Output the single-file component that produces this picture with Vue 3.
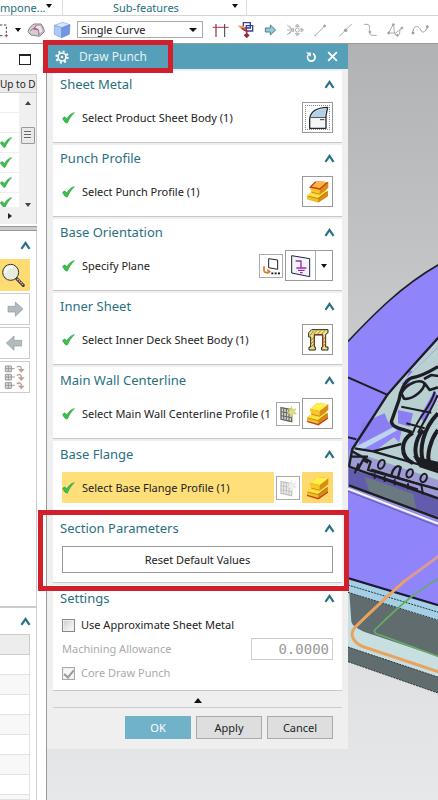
<script setup>
import { ref } from 'vue'

const curveRule = ref('Single Curve')
const useApproximate = ref(false)
const coreDrawPunch = ref(true)
const allowance = ref('0.0000')

const sections = [
  { title: 'Sheet Metal', label: 'Select Product Sheet Body (1)', kind: 'door' },
  { title: 'Punch Profile', label: 'Select Punch Profile (1)', kind: 'profile' },
  { title: 'Base Orientation', label: 'Specify Plane', kind: 'plane' },
  { title: 'Inner Sheet', label: 'Select Inner Deck Sheet Body (1)', kind: 'deck' },
  { title: 'Main Wall Centerline', label: 'Select Main Wall Centerline Profile (1', kind: 'curve', sketch: true },
  { title: 'Base Flange', label: 'Select Base Flange Profile (1)', kind: 'curve', sketch: true, active: true }
]
const statusRows = [false, false, true, true, true, true]
</script>

<template>
  <div class="window">
    <header class="ribbon">
      <div class="group group-left"><span>mpone...</span><i class="caret"></i></div>
      <div class="group group-mid"><span>Sub-features</span><i class="caret"></i></div>
      <div class="group"></div>
    </header>

    <nav class="toolbar" aria-label="Selection tools">
      <svg class="marquee" viewBox="0 0 24 60"><path d="M0 15H19V44M0 47H12" fill="none" stroke="#444" stroke-width="3" stroke-dasharray="7 5" /><path d="M14 47h10M19 42v10" stroke="#b44" stroke-width="3" /></svg>
      <i class="caret"></i>
      <svg class="tool-a" viewBox="0 0 54 54">
        <path d="M3 32C6 20 14 12 22 9H42C48 16 51 24 52 32L38 46 12 42Z" fill="#d3ccd6" stroke="#8b7f92" stroke-width="3" />
        <path d="M20 24 27 13H42L49 30 37 40 34 27Z" fill="#ece4ec" stroke="#9a8b9c" stroke-width="2" />
        <path d="M10 30C16 22 24 20 34 26L36 44" fill="none" stroke="#8b7f92" stroke-width="3" /><path d="M20 24 28 14M20 24 33 26" fill="none" stroke="#cc4a58" stroke-width="3" />
      </svg>
      <svg class="tool-b" viewBox="0 0 54 54">
        <path d="M4 13 29 4 51 11 26 20Z" fill="#d8e7ff" stroke="#86a3da" stroke-width="2" />
        <path d="M4 13 26 20V50L4 40Z" fill="#a9caf8" stroke="#7f9fda" stroke-width="2" />
        <path d="M51 11 26 20V50L49 40Z" fill="#7097e6" stroke="#6a8ad2" stroke-width="2" />
      </svg>
      <div class="select-box">
        <select v-model="curveRule" aria-label="Curve rule"><option>Single Curve</option><option>Connected Curves</option></select>
        <i class="caret"></i>
      </div>
      <div class="tools">
        <svg viewBox="0 0 75 60"><path d="M24 12V51" stroke="#a34452" stroke-width="4" /><path d="M14 22H62" stroke="#c03042" stroke-width="3" /><path d="M50 12V51" stroke="#403848" stroke-width="3" /></svg>
        <svg viewBox="0 0 75 60"><path d="M31 8H52V24H31ZM40 17H59V33H40Z" fill="none" stroke="#3c3f96" stroke-width="4" /><path d="M14 17H32L37 27H25Z" fill="#ee9a4c" /><path d="M26 25 41 33V41M41 33 32 29" stroke="#b0303c" stroke-width="5" fill="none" /><path d="M41 38 50 46 41 55 32 46Z" fill="#8c2d38" /></svg>
        <svg viewBox="0 0 75 60"><path d="M22 24H37V15L53 30 37 45V36H22Z" fill="#93cbd3" stroke="#4e7f8a" stroke-width="3" /></svg>
        <svg viewBox="0 0 75 60" fill="none" stroke="#b4b4b4" stroke-width="3"><path d="M12 14 26 28M12 45 26 31M12 30H26M19 17l7 11M19 43l7-11" /><circle cx="43" cy="30" r="6" /><path d="M43 12 49 20H37ZM43 48 49 40H37ZM24 30 32 24V36ZM62 30 54 24V36Z" fill="#ccc" /></svg>
        <svg viewBox="0 0 75 60" stroke="#aaa" stroke-width="3"><path d="M22 46 50 18" /><circle cx="50" cy="18" r="3" fill="#999" /><circle cx="22" cy="46" r="1" /></svg>
        <svg viewBox="0 0 75 60" stroke="#aaa" stroke-width="3"><path d="M18 50 56 12" /><circle cx="38" cy="31" r="4" fill="#999" /></svg>
        <svg viewBox="0 0 75 60" fill="none" stroke="#aaa" stroke-width="3"><path d="M18 13H27C44 13 24 44 43 46H56" /><circle cx="36" cy="36" r="3" fill="#999" /></svg>
        <svg viewBox="0 0 75 60" fill="none" stroke="#aaa" stroke-width="3"><path d="M17 39 31 12C35 22 30 48 43 46S45 27 57 24M17 39H38L56 25" /><g fill="#999"><circle cx="17" cy="39" r="3" /><circle cx="31" cy="14" r="3" /><circle cx="43" cy="46" r="3" /><circle cx="57" cy="24" r="3" /></g></svg>
        <svg viewBox="0 0 75 60" fill="none" stroke="#999" stroke-width="3"><path d="M14 39C18 8 34 20 38 30S52 38 59 20" /><circle cx="15" cy="39" r="3" fill="#999" /><circle cx="58" cy="20" r="3" fill="#999" /></svg>
      </div>
    </nav>

    <main class="workspace">
      <aside class="navigator">
        <div class="dock-head"><button class="maximize" aria-label="Maximize panel"></button></div>
        <div class="tree">
          <div class="tree-head">Up to D</div>
          <div class="tree-body">
            <ul>
              <li v-for="(done, i) in statusRows" :key="i">
                <svg v-if="done" class="tick" viewBox="0 0 36 33"><path d="M1 18C5 12 9 13 13 21 18 11 26 3 35 2 26 10 20 20 15 31 11 32 8 28 1 18Z" fill="#3cc04e" stroke="#2fa040" stroke-width="2" /></svg>
              </li>
            </ul>
            <div class="scrollbar"><i class="mini-up"></i><span class="thumb"></span><i class="mini-down"></i></div>
          </div>
          <div class="hscroll"><i class="mini-right"></i></div>
        </div>
        <div class="splitter"></div>
        <div class="fold"><svg class="chevron" viewBox="0 0 30 24"><path d="M4 21 15 5 26 21" /></svg></div>
        <div class="side-tools">
          <button class="side-button lit" aria-label="Find">
            <svg viewBox="0 0 90 93"><path d="M50 56 70 76" stroke="#47372a" stroke-width="9" stroke-linecap="round" /><path d="M52 57 69 74" stroke="#ddd" stroke-width="4" stroke-dasharray="4 3" /><circle cx="32" cy="37" r="24" fill="#e8ebe0" stroke="#37332a" stroke-width="3" /><path d="M16 38A18 18 0 0 1 40 21" fill="none" stroke="#fff" stroke-width="8" /></svg>
          </button>
          <button class="side-button" aria-label="Next"><svg viewBox="0 0 90 93"><path d="M24 37H46V24L69 45 46 67V54H24Z" fill="#b2babd" stroke="#939ca0" stroke-width="2" /></svg></button>
          <button class="side-button" aria-label="Previous"><svg viewBox="0 0 90 93"><path d="M65 37H42V24L19 45 42 67V54H65Z" fill="#b2babd" stroke="#939ca0" stroke-width="2" /></svg></button>
          <button class="side-button" aria-label="Expand list">
            <svg viewBox="0 0 90 93"><g v-for="n in 3" :key="n" :transform="`translate(0 ${n * 25 - 25})`"><path d="M16 12H34V29H16ZM16 20H44M25 12V29" fill="#ddd" stroke="#999" stroke-width="3" /><path d="M50 15C62 10 65 15 64 23" fill="none" stroke="#b9a093" stroke-width="4" /><path d="M54 21H74L64 32Z" fill="#b9a093" /></g></svg>
          </button>
        </div>
        <div class="fold fold-lower"><svg class="chevron" viewBox="0 0 30 24"><path d="M4 21 15 5 26 21" /></svg></div>
        <div class="grid-list"><div class="grid-head"></div><div v-for="n in 8" :key="n" class="grid-row"></div></div>
      </aside>

      <section class="viewport">
        <form class="dialog" @submit.prevent>
          <div class="title-bar">
            <svg class="gear" viewBox="0 0 42 42"><circle cx="21" cy="21" r="12" fill="none" stroke="#fff" stroke-width="5" /><circle cx="21" cy="21" r="17" fill="none" stroke="#fff" stroke-width="6" stroke-dasharray="6 7.35" /><circle cx="21" cy="21" r="4" fill="#fff" /></svg>
            <h1>Draw Punch</h1>
            <button type="button" class="title-button" aria-label="Reset"><svg viewBox="0 0 42 42"><path d="M11 15C4 25 11 36 21 36S39 22 26 11" fill="none" stroke="#fff" stroke-width="5" /><path d="M3 8H19V22Z" fill="#fff" /></svg></button>
            <button type="button" class="title-button" aria-label="Close"><svg viewBox="0 0 42 42"><path d="M7 7 35 35M35 7 7 35" stroke="#fff" stroke-width="6" /></svg></button>
            <i class="callout callout-title"></i>
          </div>

          <div class="sections">
            <section v-for="s in sections" :key="s.title" class="card">
              <div class="card-head"><h2>{{ s.title }}</h2><svg class="chevron" viewBox="0 0 30 24"><path d="M4 21 15 5 26 21" /></svg></div>
              <div class="card-row">
                <div class="pick" :class="{ active: s.active }">
                  <svg class="check" viewBox="0 0 39 36"><path d="M2 20C6 13 10 14 14 21 20 11 28 3 37 2 28 11 21 21 16 33 11 34 8 30 2 20Z" fill="#3cc04e" stroke="#2fa040" stroke-width="2" /></svg>
                  <span>{{ s.label }}</span>
                </div>

                <button v-if="s.sketch" type="button" class="small-button" aria-label="Sketch section">
                  <svg viewBox="0 0 66 66" :class="{ faded: s.active }">
                    <path d="M12 14 44 20V56L12 49Z" fill="#d4d6cd" stroke="#62645f" stroke-width="4" />
                    <path d="M20 16V51M28 18V53M36 20V55M12 26 44 32M12 38 44 44" stroke="#62645f" stroke-width="3" />
                    <path d="M43 10 47 20 57 17 51 26 59 32 48 33 44 44 40 33 30 31 38 24 33 16 42 19Z" fill="#e0e079" stroke="#a5a852" stroke-width="1" />
                  </svg>
                </button>

                <template v-if="s.kind === 'plane'">
                  <button type="button" class="small-button" aria-label="Plane dialog">
                    <svg viewBox="0 0 66 66"><path d="M26 11 53 15V43L26 38Z" fill="#fff" stroke="#222" stroke-width="3" /><path d="M12 34V47C14 54 21 54 29 51" fill="none" stroke="#d77c2b" stroke-width="5" /><path d="M22 41 33 50 22 58Z" fill="#d77c2b" /><path d="M34 55h6M44 55h6M54 55h6" stroke="#111" stroke-width="5" /></svg>
                  </button>
                  <div class="split">
                    <button type="button" class="split-main" aria-label="Inferred plane">
                      <svg viewBox="0 0 87 87"><path d="M17 14 71 23V77L17 66Z" fill="#f3f3fa" stroke="#23223b" stroke-width="3" /><path d="M29 30H45V51M31 51H61M36 58H56M42 65H50" fill="none" stroke="#a12cb4" stroke-width="4" /></svg>
                    </button>
                    <button type="button" class="split-more" aria-label="Plane types"><i class="caret"></i></button>
                  </div>
                </template>
                <button v-else type="button" class="tile" :class="[{ lit: s.active }, s.kind]" :aria-label="s.title">
                  <svg v-if="s.kind === 'door'" viewBox="0 0 87 87"><path d="M20 76V48C22 27 40 14 74 13L69 37V76Z" fill="#f4f5f5" stroke="#222b31" stroke-width="4" stroke-linejoin="round" /><path d="M26 40C31 26 45 18 70 17L65 40Z" fill="#b4d0e5" /><path d="M22 43H69M51 50H64" stroke="#303b43" stroke-width="3" fill="none" /></svg>
                  <svg v-else-if="s.kind === 'deck'" viewBox="0 0 87 87">
                    <path d="M17 23 26 14H75V23L68 28V66H75V75H56V66H59V29H34V66H37V75H18V66H23V36H17Z" fill="#eee28a" stroke="#292713" stroke-width="3" />
                    <path d="M21 32 32 17M31 28 42 16M43 28 54 16M55 28 66 16M24 47 33 36M24 57 33 46M24 67 33 56M60 45 67 36M60 55 67 46M60 65 67 56" stroke="#98863b" stroke-width="3" /><path d="M34 65V30H59V65" fill="none" stroke="#8a2f24" stroke-width="3" />
                  </svg>
                  <svg v-else viewBox="0 0 87 87">
                    <path d="M12 56 34 38 74 46 75 58 46 75 12 66Z" fill="#e39a18" />
                    <path d="M12 56 34 38 74 40 45 64Z" fill="#ffe13c" />
                    <path d="M12 56 45 64 46 77 12 67Z" fill="#f3bd28" />
                    <path d="M45 64 75 41V57L46 77Z" fill="#d98c14" />
                    <path d="M22 30 42 12 76 16V32L50 51 25 46Z" fill="#dc8c13" />
                    <path d="M22 30 42 12 76 16 50 36Z" :fill="s.kind === 'profile' ? '#f9b548' : '#fff04b'" />
                    <path d="M22 30 50 36V51L25 46Z" fill="#fbc526" />
                    <path v-if="s.kind === 'profile'" d="M38 14 22 30 50 36 74 16" fill="none" stroke="#c14418" stroke-width="4" />
                    <path v-else d="M12 67 46 77 75 57" fill="none" stroke="#c0471a" stroke-width="4" />
                    <path d="M26 46 50 52 73 35M15 57 45 65 73 44" fill="none" stroke="#a9771b" stroke-width="2" />
                  </svg>
                </button>
              </div>
            </section>

            <section class="card">
              <div class="card-head"><h2>Section Parameters</h2><svg class="chevron" viewBox="0 0 30 24"><path d="M4 21 15 5 26 21" /></svg></div>
              <div class="card-row"><button type="button" class="reset">Reset Default Values</button></div>
              <i class="callout callout-section"></i>
            </section>

            <section class="card settings">
              <div class="card-head"><h2>Settings</h2><svg class="chevron" viewBox="0 0 30 24"><path d="M4 21 15 5 26 21" /></svg></div>
              <div class="option"><input id="approx" v-model="useApproximate" type="checkbox"><label for="approx">Use Approximate Sheet Metal</label></div>
              <div class="option disabled"><label for="allowance">Machining Allowance</label><input id="allowance" v-model="allowance" class="number" type="text" disabled></div>
              <div class="option disabled"><input id="core" v-model="coreDrawPunch" type="checkbox" disabled><label for="core">Core Draw Punch</label></div>
            </section>
          </div>

          <div class="collapse"><i></i></div>
          <div class="actions">
            <button type="submit" class="primary">OK</button>
            <button type="button">Apply</button>
            <button type="button">Cancel</button>
          </div>
        </form>

        <svg class="scene" viewBox="0 0 270 2268" preserveAspectRatio="xMinYMin slice" role="img" aria-label="Die model">
          <g transform="translate(-30 618)">
            <path d="M30 274C110 190 190 108 302 44V1085L30 992Z" fill="#9084fb" />
            <path d="M300 270C230 345 190 390 145 438L48 590 38 650 300 740Z" fill="#b9d0d3" />
            <path d="M190 400 300 290V320L245 350 205 410ZM70 520 140 490 150 515 190 540 115 580 60 597ZM205 385 240 375 215 360ZM180 480 225 490 215 530 180 520ZM245 500 290 420 300 440 260 520Z" fill="#8a7ef2" />
            <path d="M190 402 215 375 300 292V352L245 372Z" fill="#b9d0d3" />
            <path d="M50 592 178 524 186 530 70 600Z" fill="#c4dcea" />
            <path d="M48 590 178 524 190 545 182 582 105 604Z" fill="#9084fb" />
            <path d="M50 592 178 526 186 536 75 598Z" fill="#bcd4ec" />
            <path d="M115 600 168 562 190 584Z" fill="#b9d0d3" />
            <path d="M32 600 300 690V812L32 715Z" fill="#9c9bd4" />
            <path d="M32 655 300 745V800L32 708Z" fill="#625cae" />
            <path d="M80 680 150 704 225 732 235 776 95 730Z" fill="#6b7980" />
            <g fill="none" stroke="#1d1d24" stroke-linejoin="round">
              <path d="M30 274C110 190 190 108 302 44" stroke-width="5" />
              <path d="M302 262C230 342 190 385 147 436L43 597 33 650" stroke-width="7" />
              <path d="M30 382 147 434M30 562 55 568" stroke-width="6" />
              <path d="M300 350C275 365 250 380 220 384 200 390 185 430 183 450L160 515C165 535 190 535 222 548" stroke-width="10" />
              <path d="M190 430C205 400 245 385 260 400 258 420 225 450 198 446ZM258 387 280 375 300 378M260 400 275 420 300 412" stroke-width="8" />
              <path d="M190 470 280 488M225 548C240 500 280 470 290 425M240 548C265 500 285 470 299 435M205 520 260 535" stroke-width="6" />
              <path d="M225 548C185 570 185 620 225 640M255 540C230 570 222 620 250 640M300 490C260 530 235 600 262 650M300 540C280 565 260 620 278 650" stroke-width="12" />
              <path d="M50 595 105 604 300 660M105 604 190 582M40 602 98 635 90 660 300 718M33 650 300 745M40 620H90M60 658 75 630 90 638M33 706 300 805" stroke-width="7" />
              <path d="M100 658 250 705 255 733M95 670 240 718M62 640 50 670M110 670V686M140 678V696M170 688V706M210 700V718" stroke-width="6" />
              <path d="M160 675C165 655 178 642 188 652L180 682" stroke-width="7" />
              <ellipse cx="130" cy="643" rx="9" ry="14" transform="rotate(25 130 643)" stroke-width="6" />
              <ellipse cx="215" cy="670" rx="9" ry="13" transform="rotate(25 215 670)" stroke-width="6" />
              <ellipse cx="257" cy="684" rx="9" ry="13" transform="rotate(25 257 684)" stroke-width="6" />
            </g>
            <path d="M225 618 300 635V670L245 652Z" fill="#1d1d24" />
            <path d="M30 716 300 821" stroke="#f5f5fb" stroke-width="6" />
            <path d="M30 724 300 829" stroke="#4d466b" stroke-width="2" />
          </g>
          <g transform="translate(-30 1368)">
            <path d="M30 233 302 315V530L30 446Z" fill="#c8dfe2" />
            <path d="M30 235 302 318V362L30 277Z" fill="#a4cfe4" />
            <path d="M34 278 302 362V470L110 406C85 398 45 385 40 365Z" fill="#606c6d" />
            <path d="M30 441 302 532V580L30 485Z" fill="#606c6d" />
            <path d="M30 234 302 316" stroke="#1c1833" stroke-width="7" />
            <path d="M30 255 302 337M30 277 302 361M30 441 302 532M30 485 302 580" fill="none" stroke="#29373d" stroke-width="3" stroke-dasharray="6 3" />
            <path d="M303 234C230 280 200 302 110 390 107 400 115 402 135 408L303 470" fill="none" stroke="#65ac65" stroke-width="5" />
            <path d="M303 168 200 243" fill="none" stroke="#d99999" stroke-width="9" />
            <path d="M202 241C145 292 90 343 50 383 35 400 42 428 78 441L303 516" fill="none" stroke="#e9a35f" stroke-width="9" />
          </g>
        </svg>
      </section>
    </main>
  </div>
</template>

<style>
body { margin: 0; }
</style>

<style scoped>
* { box-sizing: border-box; }
.window { min-height: 100vh; display: flex; flex-direction: column; overflow: hidden; background: #fff; color: #222; font: 11px/16px "Noto Sans", "Open Sans", sans-serif; }
button, input, select { font: inherit; color: inherit; margin: 0; }
button { padding: 0; border: 0; background: none; display: flex; align-items: center; justify-content: center; }
svg { display: block; flex: none; }
h1, h2, ul { margin: 0; padding: 0; font-weight: 400; list-style: none; }
.caret { flex: none; border: 3px solid transparent; border-top: 4px solid #111; border-bottom: 0; }

.ribbon { height: 16px; display: grid; grid-template-columns: 63px 184px 1fr; border-bottom: 1px solid #d5d5d5; color: #23707c; }
.group { display: flex; align-items: center; border-right: 1px solid #ddd; }
.group:last-child { border: 0; }
.group-left { justify-content: space-between; padding-right: 11px; }
.group-left .caret, .group-mid .caret { align-self: flex-start; margin-top: 4px; }
.group-mid { padding: 0 8px 0 50px; justify-content: space-between; }

.toolbar { height: 28px; display: flex; align-items: center; border-bottom: 1px solid #999; overflow: hidden; }
.marquee { width: 8px; height: 20px; margin-right: 7px; }
.tool-a, .tool-b { width: 18px; height: 18px; }
.tool-a { margin: 0 8px 0 6px; }
.select-box { position: relative; width: 126px; height: 17px; margin-left: 6px; flex: none; }
.select-box select { width: 100%; height: 100%; padding: 0 3px; border: 1px solid #aaa; border-radius: 0; background: #fff; appearance: none; }
.select-box .caret { position: absolute; right: 6px; top: 7px; border-width: 4px 4px 0; pointer-events: none; }
.tools { display: flex; margin-left: 5px; }
.tools svg { width: 25px; height: 20px; }

.workspace { flex: 1; display: grid; grid-template-columns: 47px minmax(0, 1fr); }
.navigator { display: flex; flex-direction: column; border-right: 1px solid #999; }
.navigator > * { width: 37px; border-right: 1px solid #ccc; }
.navigator > .dock-head { height: 30px; display: flex; align-items: center; justify-content: flex-end; padding-right: 6px; border: 0; }
.maximize { width: 12px; height: 11px; border: 1px solid #222; border-top-width: 2px; }
.tree-head { height: 19px; background: #ebebeb; border: 1px solid #ccc; border-width: 1px 0; line-height: 19px; white-space: nowrap; font-size: 10px; }
.tree-body { display: grid; grid-template-columns: 19px 17px; height: 114px; overflow: hidden; }
.tree-body li { height: 20px; display: flex; align-items: center; border-bottom: 1px solid #eee; }
.tick { width: 12px; height: 11px; }
.scrollbar { display: flex; flex-direction: column; align-items: center; justify-content: space-between; padding: 8px 0 6px; background: #f0f0f0; }
.mini-up { border: 3px solid transparent; border-bottom: 4px solid #444; border-top: 0; }
.mini-down { border: 3px solid transparent; border-top: 4px solid #444; border-bottom: 0; }
.mini-right { border: 3px solid transparent; border-left: 4px solid #222; border-right: 0; }
.thumb { width: 14px; height: 17px; margin-bottom: 38px; border: 1px solid #999; border-radius: 1px; background: repeating-linear-gradient(#666 0 1px, #eee 1px 3px) center / 7px 9px no-repeat, #e8e8e8; }
.hscroll { height: 17px; display: flex; align-items: center; padding-left: 8px; background: #f0f0f0; }
.navigator > .splitter { height: 5px; margin-top: 2px; border: 1px solid #999; border-width: 1px 0; background: #ccc; }
.fold { height: 28px; display: flex; align-items: center; justify-content: flex-end; padding-right: 5px; }
.chevron { width: 11px; height: 9px; }
.chevron path { fill: none; stroke: #257185; stroke-width: 6; }
.side-tools { flex: 1; display: flex; flex-direction: column; gap: 2px; }
.side-button { width: 30px; height: 32px; border: 1px solid #ccc; border-left: 0; }
.side-button.lit { background: #ffdc73; border-color: #ffdc73; }
.side-button svg { width: 30px; height: 31px; }
.fold-lower { border-top: 2px solid #ccc; }
.grid-list { padding-right: 6px; }
.grid-head { height: 21px; background: #ededed; border: 1px solid #ccc; border-left: 0; }
.grid-row { height: 20px; border: 1px solid #e2e2e2; border-width: 0 1px 1px 0; }
.grid-row:nth-child(odd) { background: #f8f8f8; }
.grid-row:last-child { height: 5px; }

.viewport { display: flex; align-items: flex-start; min-width: 0; background: linear-gradient(#b1b2b4, #c8c9ca 38%, #dedfe1 80%, #e6e8ea); }
.dialog { position: relative; z-index: 1; flex: none; width: 301px; background: #efefef; }
.title-bar { position: relative; height: 25px; display: flex; align-items: center; gap: 8px; padding: 0 9px 0 8px; background: #569fb8; color: #e4f2f6; }
.gear { width: 14px; height: 14px; }
h1 { flex: 1; font-size: 12px; padding-left: 2px; }
.title-button svg { width: 13px; height: 13px; }
.callout { position: absolute; z-index: 1; border: 5px solid #d1202c; pointer-events: none; }
.callout-title { left: -4px; top: -4px; width: 130px; height: 33px; }
.callout-section { left: -15px; right: -7px; top: -5px; bottom: -9px; }
.sections { padding: 2px 6px 0; display: flex; flex-direction: column; gap: 2px; }
.card { position: relative; padding: 4px 9px 9px; background: #fff; border-bottom: 1px solid #c8c8c8; }
.card-head { height: 18px; display: flex; align-items: center; justify-content: space-between; margin: 0 -2px 9px; }
h2 { font-size: 13px; line-height: 18px; color: #28707f; }
.card-row { display: flex; align-items: center; gap: 2px; }
.pick { flex: 1; min-width: 0; height: 31px; display: flex; align-items: center; gap: 7px; overflow: hidden; white-space: nowrap; }
.pick.active { background: #ffdf7a; }
.check { width: 13px; height: 12px; }
.small-button { width: 24px; height: 24px; border: 1px solid #aaa; background: #fff; }
.small-button svg { width: 22px; height: 22px; }
.faded { opacity: .4; filter: grayscale(1); }
.tile { width: 31px; height: 31px; border: 1px solid #999; background: #fff; }
.tile svg { width: 29px; height: 29px; }
.tile.door { outline: 1px dotted #888; outline-offset: -4px; }
.tile.lit { background: #ffd96e; border-color: #ffd96e; }
.split { display: flex; height: 31px; border: 1px solid #999; }
.split-main { width: 30px; border-right: 1px solid #aaa; }
.split-main svg { width: 29px; height: 29px; }
.split-more { width: 16px; }
.reset { flex: 1; height: 27px; border: 1px solid #999; background: #fff; }
.settings { padding-bottom: 5px; }
.settings .card-head { margin-bottom: 6px; }
.option { height: 24px; display: flex; align-items: center; gap: 6px; }
.option input[type="checkbox"] { appearance: none; width: 13px; height: 13px; border: 1px solid #888; background: linear-gradient(135deg, #ccc, #fff); outline: 1px solid #eee; outline-offset: -2px; }
.option input[type="checkbox"]:checked { display: grid; place-items: center; border-color: #aaa; background: #f6f6f6; }
.option input[type="checkbox"]:checked::after { content: ""; width: 4px; height: 8px; border: solid #999; border-width: 0 2px 2px 0; transform: rotate(40deg); }
.disabled { color: #aaa; }
.option .number { width: 82px; height: 22px; margin-left: auto; padding: 0 3px; border: 1px solid #ccc; background: #fff; color: #999; text-align: right; font: 14px "DejaVu Sans Mono", monospace; }
.collapse { height: 15px; margin: 2px 6px 0; display: flex; align-items: center; justify-content: center; border-bottom: 1px solid #ccc; }
.collapse i { border: 4px solid transparent; border-bottom: 5px solid #111; border-top: 0; }
.actions { display: flex; justify-content: flex-end; gap: 5px; padding: 8px 15px 10px; }
.actions button { width: 66px; height: 23px; border: 1px solid #aaa; background: #dedede; }
.actions .primary { background: #70b3c8; border-color: #70b3c8; color: #fff; }
.scene { flex: 1; min-width: 0; height: 756px; }
</style>
